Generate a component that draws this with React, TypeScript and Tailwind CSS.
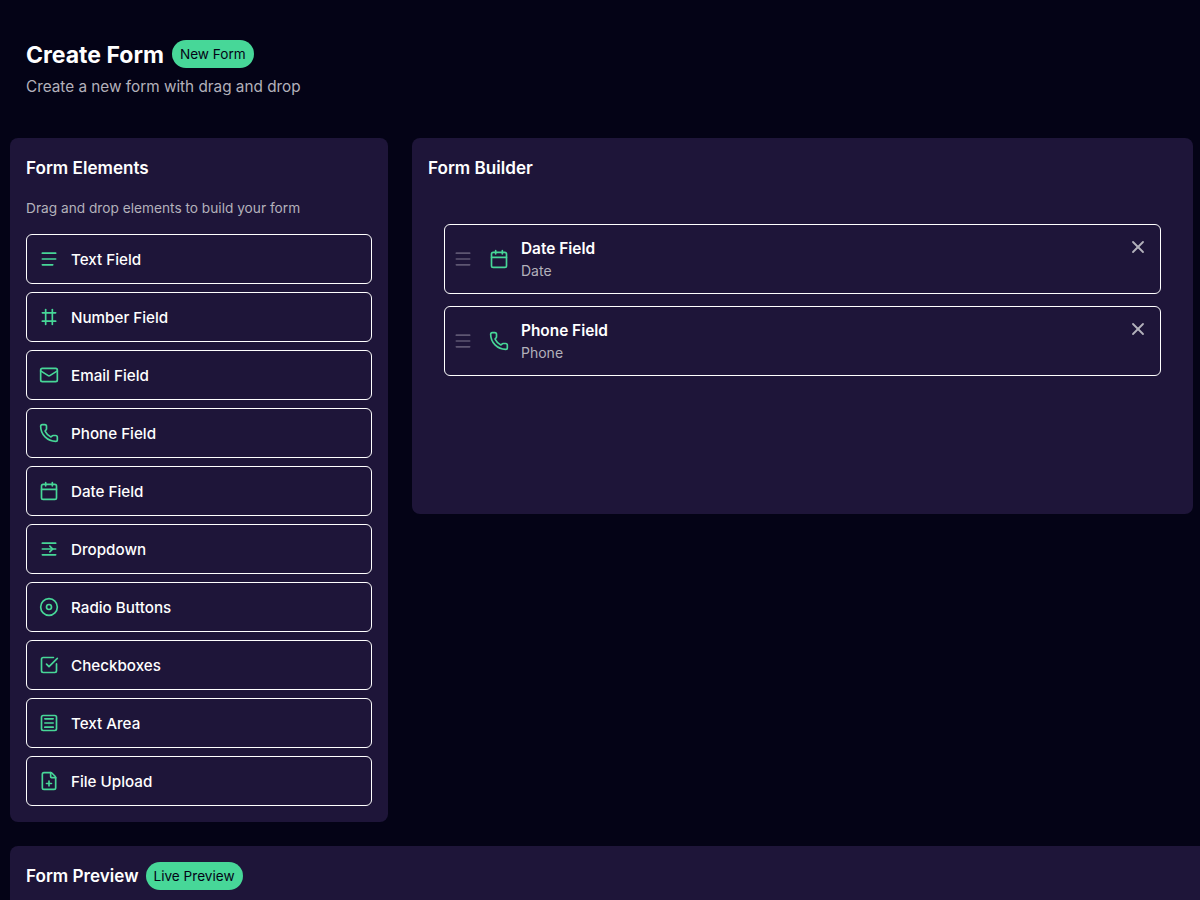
import { Mail, Menu, Phone, Calendar, SquareCheckBig, FilePlus, X } from "lucide-react";
import type { ReactNode } from "react";

function Glyph({ className, children }: { className?: string; children: ReactNode }) {
  return (
    <svg className={className} viewBox="0 0 24 24" fill="none" stroke="currentColor" strokeWidth="2" strokeLinecap="round" strokeLinejoin="round">
      {children}
    </svg>
  );
}

const TextIcon = ({ className }: { className?: string }) => (
  <Glyph className={className}>
    <path d="M4 5h16" />
    <path d="M4 12h16" />
    <path d="M4 19h12.5" />
  </Glyph>
);

const HashIcon = ({ className }: { className?: string }) => (
  <Glyph className={className}>
    <path d="M4 7h16" />
    <path d="M4 17h16" />
    <path d="M8 3v18" />
    <path d="M16 3v18" />
  </Glyph>
);

const DropdownIcon = ({ className }: { className?: string }) => (
  <Glyph className={className}>
    <path d="M4 5h16" />
    <path d="M4 12h16" />
    <path d="M4 19h16" />
    <path d="m13 8.5 3.5 3.5-3.5 3.5" />
  </Glyph>
);

const RadioIcon = ({ className }: { className?: string }) => (
  <Glyph className={className}>
    <circle cx="12" cy="12" r="10" />
    <circle cx="12" cy="12" r="3" />
  </Glyph>
);

const TextAreaIcon = ({ className }: { className?: string }) => (
  <Glyph className={className}>
    <rect x="3" y="3" width="18" height="18" rx="2" />
    <path d="M7 7h10" />
    <path d="M7 12h10" />
    <path d="M7 17h10" />
  </Glyph>
);

const elements = [
  { label: "Text Field", icon: TextIcon },
  { label: "Number Field", icon: HashIcon },
  { label: "Email Field", icon: Mail },
  { label: "Phone Field", icon: Phone },
  { label: "Date Field", icon: Calendar },
  { label: "Dropdown", icon: DropdownIcon },
  { label: "Radio Buttons", icon: RadioIcon },
  { label: "Checkboxes", icon: SquareCheckBig },
  { label: "Text Area", icon: TextAreaIcon },
  { label: "File Upload", icon: FilePlus },
];

const fields = [
  { label: "Date Field", type: "Date", icon: Calendar },
  { label: "Phone Field", type: "Phone", icon: Phone },
];

export default function App() {
  return (
    <div className="h-[900px] overflow-hidden bg-[#040316] font-['Inter',sans-serif] text-white">
      {/* Header */}
      <div className="px-[26px] pt-10 h-[138px]">
        <div className="flex items-center gap-2 h-7">
          <h1 className="pt-px text-[23px] font-bold leading-7">Create Form</h1>
          <span className="rounded-full bg-[#47d798] px-2 h-7 flex items-center text-[13.6px] text-[#040316]">New Form</span>
        </div>
        <p className="mt-[7px] text-[15.3px] leading-6 text-[#b3b1bb]">Create a new form with drag and drop</p>
      </div>

      <div className="flex items-start gap-6 pl-2.5 pr-[7px]">
        {/* Form Elements */}
        <div className="w-[378px] shrink-0 rounded-lg bg-[#1e1539] p-4">
          <h2 className="text-[17.1px] font-semibold leading-7">Form Elements</h2>
          <p className="my-4 text-[13.7px] leading-5 text-[#b3b1bb]">Drag and drop elements to build your form</p>
          <div className="flex flex-col gap-2">
            {elements.map((el) => (
              <div key={el.label} className="flex h-[50px] items-center gap-3 rounded-md border border-white px-3">
                <el.icon className="h-5 w-5 text-[#47d798]" />
                <span className="pt-0.5 text-[15.2px] font-medium">{el.label}</span>
              </div>
            ))}
          </div>
        </div>

        {/* Form Builder */}
        <div className="h-[376px] flex-1 rounded-lg bg-[#1e1539] p-4">
          <h2 className="text-[17.1px] font-semibold leading-7">Form Builder</h2>
          <div className="mt-[42px] flex flex-col gap-3 px-4">
            {fields.map((f) => (
              <div key={f.label} className="relative flex h-[70px] items-center rounded-md border border-white pl-2">
                <Menu className="h-5 w-5 text-[#5e5672]" />
                <f.icon className="ml-4 h-5 w-5 text-[#47d798]" />
                <div className="ml-3">
                  <div className="text-[15.4px] font-semibold leading-6">{f.label}</div>
                  <div className="text-sm leading-5 text-[#b3b1bb]">{f.type}</div>
                </div>
                <X className="absolute right-3 top-3 h-5 w-5 text-[#b3b1bb]" strokeWidth={2.2} />
              </div>
            ))}
          </div>
        </div>
      </div>

      {/* Form Preview */}
      <div className="ml-2.5 mt-6 h-[200px] w-[1300px] rounded-lg bg-[#1e1539] p-4">
        <div className="flex items-center gap-[7px]">
          <h2 className="text-[17.1px] font-semibold leading-7">Form Preview</h2>
          <span className="rounded-full bg-[#47d798] px-2 h-7 flex items-center text-[13.6px] text-[#040316]">Live Preview</span>
        </div>
      </div>
    </div>
  );
}
